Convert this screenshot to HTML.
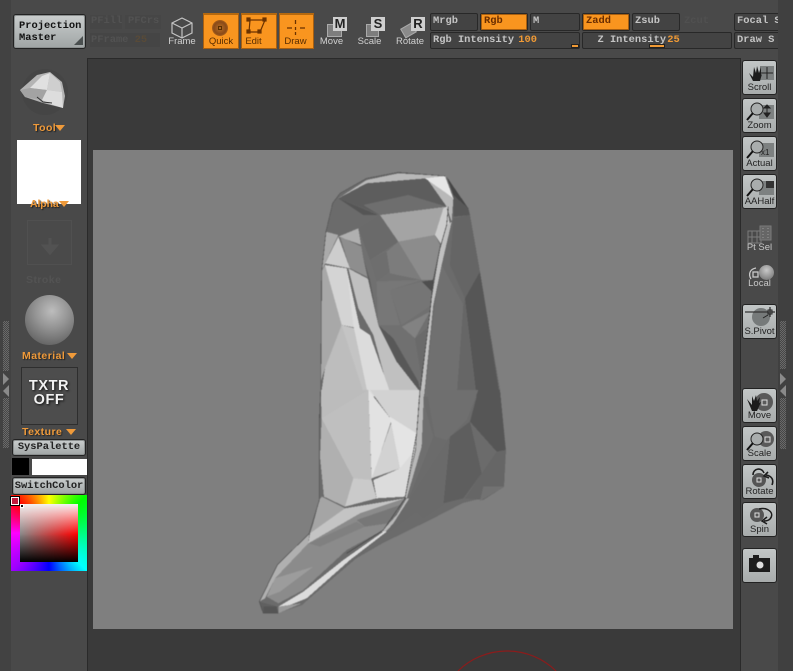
<!DOCTYPE html>
<html><head><meta charset="utf-8"><style>
html,body{margin:0;padding:0;width:793px;height:671px;overflow:hidden;background:#4a4a4a}
#r{position:relative;width:793px;height:671px;overflow:hidden;background:#494949;font-family:"Liberation Mono",monospace}
#r div,#r svg,#r span{position:absolute;box-sizing:border-box}
.b{background:linear-gradient(#c9cdcd,#a0a5a5);border:1px solid #222;border-radius:3px;box-shadow:inset 0 0 0 1px #8b8f8f}
.t{font:bold 10.4px/12px "Liberation Mono",monospace;white-space:pre;color:#222}
.l{font:9.5px/11px "Liberation Sans",sans-serif;white-space:pre;color:#d0d0d0;text-align:center}
.o{background:#f9951f;border:1px solid #a85f10;border-top:2px solid #b5690f}
.k{background:#434343;border:1px solid #282828;border-radius:2px;font:bold 10.4px/15px "Liberation Mono",monospace;color:#c4c4c4;padding-left:2px;white-space:pre;overflow:hidden}
.m{background:#f9951f;border:1px solid #282828;box-shadow:inset 0 0 0 1px #a85f10;border-radius:2px;font:bold 10.4px/15px "Liberation Mono",monospace;color:#6a2d00;padding-left:3px}
.g{font:bold 10.5px/12px "Liberation Sans",sans-serif;letter-spacing:.45px;color:#ef9a3a;white-space:pre;text-shadow:1px 1px 1px #222}
.rb{left:742px;width:35px;height:35px;background:linear-gradient(#c2c6c6,#a8acac);border:1px solid #222;border-radius:3px}
.rl{font:9.5px/11px "Liberation Sans",sans-serif;color:#222;left:0;width:33px;text-align:center;top:21px;white-space:pre}
.d{background:repeating-conic-gradient(#6a6a6a 0 25%,#464646 0 50%) 0 0/2px 2px}
.tile{font:bold 13px/13px "Liberation Sans",sans-serif;background:#cfcfcf;color:#222;text-align:center;width:14px;height:14px}
</style></head><body><div id="r">
<div style="left:0;top:0;width:11px;height:671px;background:#424242"></div>
<div style="left:778px;top:0;width:15px;height:671px;background:#404040"></div>
<div style="left:87px;top:58px;width:654px;height:613px;background:#3a3a3a;border-top:1px solid #2a2a2a;border-left:1px solid #2a2a2a;border-right:1px solid #2a2a2a"></div>
<div style="left:93px;top:150px;width:640px;height:479px;background:#7f7f7f"></div>

<svg style="left:0;top:0" width="793" height="671" viewBox="0 0 793 671">
<path d="M458 671A70 70 0 0 1 556 671" fill="none" stroke="#8a1c1c" stroke-width="1.2"/>
<g style="filter:blur(.45px)" shape-rendering="crispEdges">
<polygon fill="#6b6b6b" points="333,202 340,193 367,178 398,172 445,176 453,188 468,208 472,228 480,272 498,378 500,390 506,450 504,487 483,498 463,503 430,520 383,543 350,562 302,605 278,613 263,613 259,602 277,565 309,533 319,500 319,420 321,382 322,265 326,232"/>
<g transform="translate(250,165) scale(.33333)">
<!-- right body -->
<polygon fill="#707070" points="575,300 640,420 620,695 525,695 555,420"/>
<polygon fill="#656565" points="660,150 690,320 645,400 600,300 610,160"/>
<polygon fill="#565656" points="690,320 750,695 680,695 645,400"/>
<polygon fill="#666" points="640,420 645,400 680,695 620,695"/>
<polygon fill="#585858" points="610,70 655,130 660,150 610,155"/>
<polygon fill="#454545" points="590,35 655,130 610,90"/>
<!-- left panel -->
<polygon fill="#aaa" points="228,200 265,210 225,295 215,320"/>
<polygon fill="#cdcdcd" points="225,295 265,215 300,310"/>
<polygon fill="#a8a8a8" points="215,320 225,300 275,480 225,610 212,650"/>
<polygon fill="#d4d4d4" points="225,300 290,310 325,490 275,480"/>
<polygon fill="#bdbdbd" points="225,610 275,480 350,695 212,695"/>
<polygon fill="#c4c4c4" points="275,480 315,490 410,695 345,695"/>
<polygon fill="#b0b0b0" points="265,215 325,190 335,240"/>
<polygon fill="#8e8e8e" points="270,215 335,245 360,340 300,310"/>
<polygon fill="#c0c0c0" points="295,310 360,345 385,480 510,660 515,695 420,695 370,510 325,430"/>
<polygon fill="#dcdcdc" points="290,310 330,490 360,510 425,695 355,695 310,480"/>
<!-- cave -->
<polygon fill="#707070" points="325,190 390,150 590,125 575,240 550,345 510,680 385,480 340,280"/>
<polygon fill="#a4a4a4" points="390,150 590,125 580,160 555,210 445,230"/>
<polygon fill="#8c8c8c" points="445,230 555,210 570,240 550,345 515,345"/>
<polygon fill="#6a6a6a" points="325,190 390,150 445,230 360,285"/>
<polygon fill="#6e6e6e" points="360,285 410,260 420,320 380,350"/>
<polygon fill="#7c7c7c" points="410,260 445,230 515,345 420,325"/>
<polygon fill="#777" points="380,350 515,345 420,375 450,480 385,480"/>
<polygon fill="#757575" points="515,350 545,380 545,420 455,480 420,375"/>
<polygon fill="#4e4e4e" points="545,380 515,350 550,345"/>
<polygon fill="#828282" points="455,485 540,440 495,520"/>
<polygon fill="#6a6a6a" points="495,520 530,490 515,640"/>
<polygon fill="#585858" points="385,480 430,520 505,650 510,680 440,590"/>
<polygon fill="#5c5c5c" points="340,280 360,345 385,480 372,420"/>
<polygon fill="#cdcdcd" points="590,125 600,180 575,240 555,210 580,130"/>
<!-- top band -->
<polygon fill="#6b6b6b" points="265,100 390,150 325,190 265,210 245,120"/>
<polygon fill="#555" points="265,100 385,150 340,150"/>
<polygon fill="#5d5d5d" points="265,100 350,55 530,40 590,125 390,150"/>
<polygon fill="#6e6e6e" points="340,120 475,90 590,125 390,150"/>
<!-- top rim -->
<polygon fill="#b8b8b8" points="265,100 350,45 445,25 585,33 610,100 605,170 590,125 530,40 350,55"/>
<polygon fill="#e6e6e6" points="525,40 585,33 610,100 590,85"/>
<polygon fill="#c0c0c0" points="605,170 575,300 550,420 522,695 510,695 545,400 570,250 590,180"/>
<polyline fill="none" stroke="#444" stroke-width="2" points="595,125 590,180 570,250 550,345 540,440 510,680"/>
<polyline fill="none" stroke="#555" stroke-width="2" points="212,695 215,320 228,200 248,115 270,85 350,40 445,22 585,33"/>
</g>
<g transform="translate(250,390) scale(.33333)">
<!-- right -->
<polygon fill="#6f6f6f" points="510,0 550,140 470,340 510,180"/>
<polygon fill="#6f6f6f" points="530,0 685,0 650,90 590,150 555,140"/>
<polygon fill="#5e5e5e" points="580,340 600,140 660,95 695,250 640,325"/>
<polygon fill="#565656" points="685,0 750,0 767,180 740,185 660,95"/>
<polygon fill="#666" points="695,250 740,185 767,180 762,290 700,330 645,325"/>
<polygon fill="#727272" points="700,290 762,290 690,333"/>
<polygon fill="#6a6a6a" points="470,340 600,140 580,345 520,385"/>
<!-- left -->
<polygon fill="#bfbfbf" points="215,85 355,0 365,270 310,265"/>
<polygon fill="#bcbcbc" points="212,0 355,0 215,85"/>
<polygon fill="#b0b0b0" points="215,85 310,265 285,350 222,320 210,200"/>
<polygon fill="#d2d2d2" points="360,0 508,0 500,130 425,90"/>
<polygon fill="#e2e2e2" points="355,0 425,90 395,180 365,265"/>
<polygon fill="#d2d2d2" points="425,95 450,235 365,265"/>
<polygon fill="#e4e4e4" points="420,80 500,130 495,180 450,235"/>
<polygon fill="#dcdcdc" points="370,270 450,235 495,180 465,320 380,325"/>
<polygon fill="#cacaca" points="310,265 365,270 380,325 285,350"/>
<polygon fill="#a5a5a5" points="208,330 215,320 285,355 180,430 190,400"/>
<!-- foot -->
<polygon fill="#c4c4c4" points="180,430 285,355 465,325 330,370 175,460"/>
<polygon fill="#8b8b8b" points="175,460 330,370 465,325 440,365 400,420 290,480 160,600 85,640 50,620 75,565"/>
<polygon fill="#777" points="320,390 450,345 415,400 345,410"/>
<polygon fill="#808080" points="175,460 320,395 345,410 210,470"/>
<polygon fill="#b0b0b0" points="82,525 178,430 175,460 75,565 45,625 28,635"/>
<polygon fill="#9c9c9c" points="50,620 75,565 190,530 90,605"/>
<!-- shadow under foot -->
<polygon fill="#6a6a6a" points="170,625 300,515 400,430 470,340 520,350 360,470 155,645"/>
<!-- rims -->
<polygon fill="#b8b8b8" points="470,325 515,170 522,0 508,0 498,180 465,320"/>
<polygon fill="#b8b8b8" points="470,325 478,325 430,400 405,428 395,425 440,375"/>
<polygon fill="#dcdcdc" points="400,425 280,510 160,605 85,650 120,645 170,625 300,510 410,425"/>
<polygon fill="#606060" points="28,635 85,650 40,670"/>
<polygon fill="#555" points="40,650 80,650 85,670 40,670"/>
<polygon fill="#999" points="85,650 155,640 85,670"/>
<polyline fill="none" stroke="#444" stroke-width="2" points="510,0 500,130 465,325 400,420 290,490"/>
<polyline fill="none" stroke="#505050" stroke-width="2" points="212,0 208,90 208,330 178,430 82,525 28,635 40,670"/>
</g>
</g>
</svg>

<!-- Top bar -->
<div class="b t" style="left:13px;top:14px;width:73px;height:35px;padding:5px 0 0 5px;line-height:12px;color:#111;">Projection
Master</div>
<svg style="left:74px;top:36px" width="10" height="10"><polygon points="0,9 9,9 9,0" fill="#4a4f4f"/></svg>
<div style="left:90px;top:15px;width:32px;height:14px;background:#464646"></div>
<div style="left:125px;top:15px;width:36px;height:14px;background:#464646"></div>
<div style="left:90px;top:33px;width:70px;height:14px;background:#454545"></div>
<div class="t" style="left:91px;top:15px;color:#525252">PFill</div>
<div class="t" style="left:128px;top:15px;color:#525252">PFCrs</div>
<div class="t" style="left:91px;top:34px;color:#525252">PFrame <span style="position:static;color:#584a38">25</span></div>

<svg style="left:170px;top:16px" width="24" height="24" fill="none" stroke="#c4c4c4" stroke-width="1.2"><path d="M12 2 22 7 22 17 12 22 2 17 2 7ZM2 7 12 12 22 7M12 12V22"/></svg>
<div class="l" style="left:166px;top:36px;width:32px">Frame</div>
<div class="o" style="left:203px;top:13px;width:36px;height:36px"></div>
<div style="left:212px;top:20px;width:16px;height:16px;border-radius:50%;background:radial-gradient(#b86f26,#8a4a18 55%,#e08a22)"></div>
<div style="left:218px;top:26px;width:4px;height:4px;border:1px solid #5a2f00"></div>
<div class="l" style="left:203px;top:36px;width:36px;color:#5a2d00">Quick</div>
<div class="o" style="left:241px;top:13px;width:36px;height:36px"></div>
<svg style="left:246px;top:17px" width="24" height="20" fill="none" stroke="#6a3200" stroke-width="1.2"><path d="M3 3H19M4 3 3 15H14L19 3"/><rect x="1" y="1" width="3" height="3" fill="#6a3200"/><rect x="17" y="1" width="3" height="3" fill="#6a3200"/><rect x="1" y="13" width="3" height="3" fill="#6a3200"/><rect x="12" y="13" width="3" height="3" fill="#6a3200"/></svg>
<div class="l" style="left:241px;top:36px;width:25px;color:#5a2d00">Edit</div>
<div class="o" style="left:279px;top:13px;width:35px;height:36px"></div>
<svg style="left:286px;top:19px" width="20" height="16" stroke="#6a3200" stroke-width="1.3"><path d="M1 9H6M14 9H19M9.500 1V5M9.500 8V11M9.500 13V16"/></svg>
<div class="l" style="left:278px;top:36px;width:35px;color:#5a2d00">Draw</div>

<div style="left:327px;top:24px;width:15px;height:13px;background:#7d7d7d;border:1px solid #aaa"></div>
<div class="tile" style="left:333px;top:17px">M</div>
<div class="l" style="left:318px;top:36px;width:27px">Move</div>
<div style="left:366px;top:24px;width:13px;height:13px;background:#7d7d7d;border:1px solid #aaa"></div>
<div class="tile" style="left:371px;top:17px">S</div>
<div class="l" style="left:356px;top:36px;width:27px">Scale</div>
<div style="left:402px;top:25px;width:13px;height:11px;background:#8a8a8a;border:1px solid #aaa;transform:rotate(-30deg)"></div>
<div class="tile" style="left:411px;top:17px">R</div>
<div class="l" style="left:394px;top:36px;width:32px">Rotate</div>

<div class="k" style="left:430px;top:13px;width:48px;height:18px">Mrgb</div>
<div class="m" style="left:480px;top:13px;width:48px;height:18px">Rgb</div>
<div class="k" style="left:530px;top:13px;width:50px;height:18px">M</div>
<div class="m" style="left:582px;top:13px;width:48px;height:18px">Zadd</div>
<div class="k" style="left:632px;top:13px;width:48px;height:18px">Zsub</div>
<div class="t" style="left:684px;top:15px;color:#505050">Zcut</div>
<div class="k" style="left:734px;top:13px;width:46px;height:18px;border-right:0;border-radius:2px 0 0 2px">Focal S</div>
<div class="k" style="left:430px;top:32px;width:150px;height:17px">Rgb Intensity <span style="position:static;color:#f09a35;margin-left:-2px">100</span></div>
<div style="left:571px;top:44px;width:8px;height:4px;background:#f09a35;border:1px solid #222"></div>
<div class="k" style="left:582px;top:32px;width:150px;height:17px">  Z Intensity <span style="position:static;color:#f09a35;margin-left:-5px">25</span></div>
<div style="left:649px;top:44px;width:16px;height:4px;background:#f09a35;border:1px solid #222"></div>
<div class="k" style="left:734px;top:32px;width:46px;height:17px;border-right:0;border-radius:2px 0 0 2px">Draw S</div>
<div style="left:778px;top:0;width:15px;height:58px;background:#404040"></div>

<!-- Left panel -->
<svg style="left:15px;top:66px" width="56" height="50"><circle cx="30" cy="26" r="23" fill="#454545"/>
<g transform="translate(-15,-66)">
<polygon fill="#b4b4b4" points="20,90 37,75 50,72 62,82 65,96 63,108 43,103 25,97"/>
<polygon fill="#e0e0e0" points="30,88 42,76 50,73 47,90"/>
<polygon fill="#cfcfcf" points="47,90 50,73 60,82 62,92"/>
<polygon fill="#a3a3a3" points="20,90 30,88 47,90 42,100 25,97"/>
<polygon fill="#dddddd" points="42,100 47,90 62,92 63,108 50,104"/>
<polyline fill="none" stroke="#333" points="37,97 43,102 52,103"/>
</g></svg>
<div class="g" style="left:33px;top:122px">Tool</div>
<svg style="left:55px;top:125px" width="10" height="7"><polygon points="0,0 10,0 5,6" fill="#ef9a3a"/></svg>
<div style="left:17px;top:140px;width:64px;height:64px;background:#fff"></div>
<div class="g" style="left:30px;top:198px;letter-spacing:-.1px">Alpha</div>
<svg style="left:59px;top:201px" width="10" height="7"><polygon points="0,0 10,0 5,6" fill="#ef9a3a"/></svg>
<div style="left:27px;top:220px;width:45px;height:45px;border:1px solid #505050;background:#4a4a4a"></div>
<svg style="left:40px;top:236px" width="20" height="22"><path d="M10 2V14M4 10 10 17 16 10Z" stroke="#525252" stroke-width="3" fill="#525252"/></svg>
<div class="g" style="left:26px;top:274px;color:#535353;text-shadow:none">Stroke</div>
<div style="left:25px;top:295px;width:49px;height:50px;border-radius:50%;background:radial-gradient(circle at 55% 32%,#bdbdbd 0,#959595 38%,#5f5f5f 85%,#4f4f4f 100%)"></div>
<div class="g" style="left:22px;top:350px">Material</div>
<svg style="left:67px;top:353px" width="10" height="7"><polygon points="0,0 10,0 5,6" fill="#ef9a3a"/></svg>
<div style="left:21px;top:367px;width:57px;height:58px;background:#4d4d4d;border:1px solid #2e2e2e"></div>
<div style="left:27px;top:379px;width:44px;text-align:center;color:#f2f2f2;font:bold 14.5px/14px 'Liberation Sans',sans-serif;letter-spacing:.6px;text-shadow:1px 1px 2px #111">TXTR<br>OFF</div>
<div class="g" style="left:22px;top:426px">Texture</div>
<svg style="left:66px;top:429px" width="10" height="7"><polygon points="0,0 10,0 5,6" fill="#ef9a3a"/></svg>
<div class="b t" style="left:12px;top:439px;width:74px;height:17px;text-align:center;line-height:15px">SysPalette</div>
<div style="left:12px;top:458px;width:17px;height:17px;background:#000"></div>
<div style="left:32px;top:459px;width:55px;height:16px;background:#fff"></div>
<div class="b t" style="left:12px;top:477px;width:74px;height:18px;text-align:center;line-height:16px">SwitchColor</div>
<div style="left:11px;top:495px;width:76px;height:76px;background:conic-gradient(from 0deg,#ff0 0,#0f0 45deg,#0ff 135deg,#00f 180deg,#a000ff 225deg,#f0f 270deg,#f00 315deg,#ff0 360deg)"></div>
<div style="left:20px;top:504px;width:58px;height:58px;background:linear-gradient(to bottom,#f2f2f2 0,rgba(255,225,225,.7) 18%,rgba(255,255,255,0) 52%,rgba(0,0,0,.1) 56%,#000 100%),linear-gradient(to right,#888,#f00)"></div>
<div style="left:11px;top:497px;width:8px;height:8px;background:#c01a3c;border:1px solid #fff;box-shadow:0 0 0 1px #000"></div>
<div style="left:20px;top:504px;width:4px;height:4px;background:#111;border:1px solid #fff"></div>

<!-- Grippers -->
<div class="d" style="left:3px;top:321px;width:6px;height:50px"></div>
<div class="d" style="left:3px;top:398px;width:6px;height:50px"></div>
<svg style="left:2px;top:372px" width="8" height="26"><polygon points="1,1 7,7 1,13" fill="#8a8a8a"/><polygon points="7,13 1,19 7,25" fill="#8a8a8a"/></svg>
<div class="d" style="left:780px;top:321px;width:6px;height:48px"></div>
<div class="d" style="left:780px;top:398px;width:6px;height:51px"></div>
<svg style="left:779px;top:372px" width="8" height="26"><polygon points="1,1 7,7 1,13" fill="#8a8a8a"/><polygon points="7,13 1,19 7,25" fill="#8a8a8a"/></svg>

<!-- Right panel -->
<div class="rb" style="top:60px"><svg style="left:3px;top:3px" width="29" height="20"><rect x="14" y="2" width="14" height="14" fill="#7d8181"/><path d="M21 3V15M15 9H27" stroke="#222"/><path d="M3 9 7 13 8 3 10 9 11 2 13 9 15 3 15 11 16 10 14 17H7Z" fill="#1c1c1c"/></svg><span class="rl">Scroll</span></div>
<div class="rb" style="top:98px"><svg style="left:3px;top:2px" width="29" height="22"><rect x="13" y="4" width="15" height="14" fill="#7d8181"/><path d="M21 5V15M18 7 21 4 24 7ZM18 12 21 16 24 12Z" stroke="#222" fill="#222"/><circle cx="11" cy="8" r="6" fill="#a9adad" stroke="#222"/><path d="M7 12 1 19" stroke="#111" stroke-width="2"/></svg><span class="rl">Zoom</span></div>
<div class="rb" style="top:136px"><svg style="left:3px;top:2px" width="29" height="22"><rect x="13" y="4" width="15" height="14" fill="#7d8181"/><text x="15" y="16" font-size="8" font-family="Liberation Sans" fill="#222">x1</text><circle cx="11" cy="8" r="6" fill="#a9adad" stroke="#222"/><path d="M7 12 1 19" stroke="#111" stroke-width="2"/></svg><span class="rl">Actual</span></div>
<div class="rb" style="top:174px"><svg style="left:3px;top:2px" width="29" height="22"><rect x="13" y="4" width="15" height="14" fill="#7d8181"/><rect x="20" y="4" width="8" height="7" fill="#333"/><circle cx="11" cy="8" r="6" fill="#a9adad" stroke="#222"/><path d="M7 12 1 19" stroke="#111" stroke-width="2"/></svg><span class="rl">AAHalf</span></div>
<svg style="left:747px;top:225px" width="26" height="20" fill="none" stroke="#7a7a7a"><path d="M1 6H14V18H1ZM1 12H14M5 6V18M10 6V18"/><rect x="13" y="1" width="11" height="14" fill="#666"/><path d="M16 3V13M21 3V13" stroke="#999" stroke-dasharray="1 2"/></svg>
<div class="l" style="left:742px;top:242px;width:35px;color:#c8c8c8">Pt Sel</div>
<div style="left:759px;top:265px;width:15px;height:15px;border-radius:50%;background:radial-gradient(circle at 50% 35%,#c8c8c8,#6a6a6a)"></div>
<svg style="left:747px;top:266px" width="14" height="16" fill="none" stroke="#c8c8c8" stroke-width="1.3"><path d="M9 2C3 3 1 8 4 13"/><rect x="6" y="6" width="5" height="5"/></svg>
<div class="l" style="left:742px;top:278px;width:35px;color:#c8c8c8">Local</div>
<div class="rb" style="top:304px"><svg style="left:1px;top:1px" width="32" height="22"><circle cx="17" cy="11" r="9" fill="#767a7a"/><path d="M1 6H31M26 1V11" stroke="#333" stroke-width="1.3"/><rect x="24" y="4" width="4" height="4" fill="none" stroke="#222"/><path d="M19 12 24 9" stroke="#222"/></svg><span class="rl">S.Pivot</span></div>

<div class="rb" style="top:388px"><svg style="left:3px;top:3px" width="29" height="21"><circle cx="18" cy="10" r="9" fill="#5a5a5a"/><rect x="16" y="8" width="5" height="5" fill="none" stroke="#ddd"/><path d="M1 7 6 13 6 4 8 9 10 3 11 9 14 5 13 11 15 10 11 19H6Z" fill="#1c1c1c"/></svg><span class="rl">Move</span></div>
<div class="rb" style="top:426px"><svg style="left:3px;top:3px" width="29" height="21"><circle cx="20" cy="9" r="8" fill="#5a5a5a"/><rect x="19" y="7" width="5" height="5" fill="none" stroke="#ddd"/><circle cx="11" cy="9" r="6" fill="#a9adad" stroke="#222"/><path d="M7 13 1 20" stroke="#111" stroke-width="2"/></svg><span class="rl">Scale</span></div>
<div class="rb" style="top:464px"><svg style="left:3px;top:1px" width="29" height="22"><circle cx="13" cy="14" r="7" fill="#555"/><rect x="11" y="12" width="4" height="4" fill="none" stroke="#ddd"/><path d="M7 9C7 2 16 1 18 7M26 19C28 14 26 10 20 9M22 6 18 10 23 12" fill="none" stroke="#1c1c1c" stroke-width="1.6"/></svg><span class="rl">Rotate</span></div>
<div class="rb" style="top:502px"><svg style="left:3px;top:3px" width="29" height="20"><circle cx="11" cy="9" r="7" fill="#555"/><rect x="9" y="7" width="4" height="4" fill="none" stroke="#ddd"/><path d="M13 3C22 1 29 7 24 13 22 15 20 15 18 15M21 11 16 15 21 18" fill="none" stroke="#1c1c1c" stroke-width="1.5"/></svg><span class="rl">Spin</span></div>
<div class="rb" style="top:548px"><svg style="left:6px;top:5px" width="23" height="20"><rect x="0" y="4" width="21" height="14" fill="#1c1c1c"/><rect x="4" y="1" width="6" height="3" fill="#1c1c1c"/><circle cx="11" cy="11" r="3.500" fill="#ddd"/></svg></div>
</div></body></html>
